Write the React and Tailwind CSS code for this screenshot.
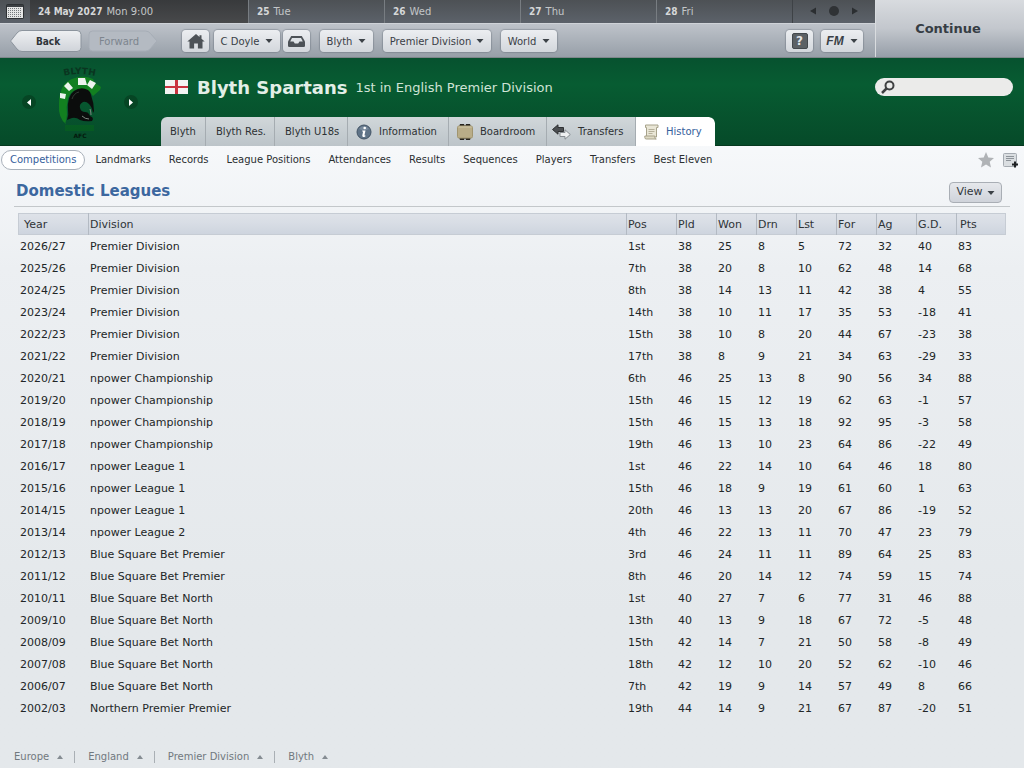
const days = ['25 Tue', '26 Wed', '27 Thu', '28 Fri'];

const tabs = [
  { label: 'Blyth', width: 'w-[45px] pl-[9px]' },
  { label: 'Blyth Res.', width: 'w-[69px] pl-[10px]' },
  { label: 'Blyth U18s', width: 'w-[73px] pl-[10px]' },
  { label: 'Information', width: 'w-[101px] pl-[8px]', icon: InfoIcon },
  { label: 'Boardroom', width: 'w-[98px] pl-[8px]', icon: BoardroomIcon },
  { label: 'Transfers', width: 'w-[89px] pl-[5px]', icon: TransfersIcon },
  { label: 'History', width: 'w-[79px] pl-[8px]', icon: HistoryIcon, active: true },
];

const sections = [
  'Competitions', 'Landmarks', 'Records', 'League Positions', 'Attendances',
  'Results', 'Sequences', 'Players', 'Transfers', 'Best Eleven',
];

const columns = ['Year', 'Division', 'Pos', 'Pld', 'Won', 'Drn', 'Lst', 'For', 'Ag', 'G.D.', 'Pts'];

const seasons = [
  ['2026/27', 'Premier Division', '1st', 38, 25, 8, 5, 72, 32, 40, 83],
  ['2025/26', 'Premier Division', '7th', 38, 20, 8, 10, 62, 48, 14, 68],
  ['2024/25', 'Premier Division', '8th', 38, 14, 13, 11, 42, 38, 4, 55],
  ['2023/24', 'Premier Division', '14th', 38, 10, 11, 17, 35, 53, -18, 41],
  ['2022/23', 'Premier Division', '15th', 38, 10, 8, 20, 44, 67, -23, 38],
  ['2021/22', 'Premier Division', '17th', 38, 8, 9, 21, 34, 63, -29, 33],
  ['2020/21', 'npower Championship', '6th', 46, 25, 13, 8, 90, 56, 34, 88],
  ['2019/20', 'npower Championship', '15th', 46, 15, 12, 19, 62, 63, -1, 57],
  ['2018/19', 'npower Championship', '15th', 46, 15, 13, 18, 92, 95, -3, 58],
  ['2017/18', 'npower Championship', '19th', 46, 13, 10, 23, 64, 86, -22, 49],
  ['2016/17', 'npower League 1', '1st', 46, 22, 14, 10, 64, 46, 18, 80],
  ['2015/16', 'npower League 1', '15th', 46, 18, 9, 19, 61, 60, 1, 63],
  ['2014/15', 'npower League 1', '20th', 46, 13, 13, 20, 67, 86, -19, 52],
  ['2013/14', 'npower League 2', '4th', 46, 22, 13, 11, 70, 47, 23, 79],
  ['2012/13', 'Blue Square Bet Premier', '3rd', 46, 24, 11, 11, 89, 64, 25, 83],
  ['2011/12', 'Blue Square Bet Premier', '8th', 46, 20, 14, 12, 74, 59, 15, 74],
  ['2010/11', 'Blue Square Bet North', '1st', 40, 27, 7, 6, 77, 31, 46, 88],
  ['2009/10', 'Blue Square Bet North', '13th', 40, 13, 9, 18, 67, 72, -5, 48],
  ['2008/09', 'Blue Square Bet North', '15th', 42, 14, 7, 21, 50, 58, -8, 49],
  ['2007/08', 'Blue Square Bet North', '18th', 42, 12, 10, 20, 52, 62, -10, 46],
  ['2006/07', 'Blue Square Bet North', '7th', 42, 19, 9, 14, 57, 49, 8, 66],
  ['2002/03', 'Northern Premier Premier', '19th', 44, 14, 9, 21, 67, 87, -20, 51],
];

const crumbs = ['Europe', 'England', 'Premier Division', 'Blyth'];

function Caret({ className = 'text-[#3c4247]' }) {
  return (
    <svg width="8" height="4" viewBox="0 0 8 4" className={`shrink-0 ${className}`} aria-hidden="true">
      <path d="M0.5 0h7L4 4z" fill="currentColor" />
    </svg>
  );
}

function CalendarIcon() {
  return (
    <svg width="18" height="15" viewBox="0 0 18 15" aria-hidden="true">
      <rect x="0.5" y="0.5" width="17" height="14" rx="1" fill="#3b3f43" stroke="#2d3033" />
      <rect x="1" y="3" width="16" height="11" fill="#e4e5e5" />
      {[4, 6, 8, 10, 12].map((y) => (
        <path key={y} d={`M2 ${y + 0.5}h14`} stroke="#74787b" strokeDasharray="1 1" />
      ))}
    </svg>
  );
}

function HomeIcon() {
  return (
    <svg width="18" height="15" viewBox="0 0 18 15" fill="#4d5257" aria-hidden="true">
      <path d="M9 0 0.3 7.6h2.2V14.5h4.6V9.5h3.8v5h4.6V7.6h2.2L14.5 4.8V1.2h-2v1.9z" />
    </svg>
  );
}

function InboxIcon() {
  return (
    <svg width="17" height="11" viewBox="0 0 17 11" aria-hidden="true">
      <path d="M3.2 0h10.6L17 5.5v4.2q0 1.3-1.3 1.3H1.3Q0 11 0 9.7V5.5z" fill="#4d5257" />
      <path d="M4 2h9l1.800 3.500h-3.300l-1.300 2H6.800l-1.300-2H2.200z" fill="#dfe3e7" />
    </svg>
  );
}

function HelpIcon() {
  return (
    <span className="flex size-4 items-center justify-center rounded-[2px] border border-[#44494d] bg-[#5c6165] text-[12px] leading-none font-bold text-[#e4e6e8]">
      ?
    </span>
  );
}

function InfoIcon() {
  return (
    <svg width="16" height="16" viewBox="0 0 16 16" aria-hidden="true">
      <circle cx="8" cy="8" r="7" fill="#5f7387" stroke="#435465" />
      <path d="M3 5a6 6 0 0 1 10 0q-5 2.500-10 0z" fill="#8798a8" opacity="0.6" />
      <circle cx="8.700" cy="4" r="1.300" fill="#fff" />
      <path d="M6.300 6.500h3.200l-1 4.600q-.1.700 1 .3l-.2 1q-3.300 1.400-3-.9l.8-4H6.100z" fill="#fff" />
    </svg>
  );
}

function BoardroomIcon() {
  return (
    <svg width="16" height="16" viewBox="0 0 16 16" aria-hidden="true">
      <path d="M3 0h4l.5 1.500h1L9 0h4l1 3H2zM3 16h4l.5-1.500h1L9 16h4l1-3H2z" fill="#26241f" />
      <rect x="0.500" y="2" width="15" height="12" rx="1.500" fill="#b9ad88" stroke="#a1956f" />
      <path d="M1.500 3h13" stroke="#d2c9a9" />
    </svg>
  );
}

function TransfersIcon() {
  return (
    <svg width="19" height="16" viewBox="0 0 19 16" aria-hidden="true">
      <path d="M18.300 10.500 13 5.800v2.700H8v4h5v2.700z" fill="#eef0f1" stroke="#868b90" strokeLinejoin="round" />
      <path d="M0.500 5.500 6 0.800v2.700h5.500v4H6v2.700z" fill="#4b4e51" stroke="#2f3133" strokeLinejoin="round" />
    </svg>
  );
}

function HistoryIcon() {
  return (
    <svg width="15" height="16" viewBox="0 0 15 16" fill="none" aria-hidden="true">
      <path d="M1.500 1h12.500v2.500H12.500V13H2.500V3.500h-1z" fill="#e9e6d6" stroke="#a7a28a" />
      <path d="M0.800 12h10v1.500q0 1.500 1.500 1.500H2.300Q.8 15 .8 13.500z" fill="#dedac5" stroke="#a7a28a" />
      <path d="M4.500 5.500h6M4.500 7.500h6M4.500 9.500h4" stroke="#b5b09b" />
    </svg>
  );
}

function Crest() {
  return (
    <svg width="50" height="80" viewBox="0 0 50 80" className="shrink-0" aria-label="Blyth Spartans crest" role="img">
      <defs>
        <path id="crest-arc" d="M2 16Q24 8 47 16" />
      </defs>
      <text fontFamily="DejaVu Sans" fontSize="9" fontWeight="bold" fill="#0a3520">
        <textPath href="#crest-arc" startOffset="50%" textAnchor="middle">BLYTH</textPath>
      </text>
      <path
        d="M11 62Q3 56 4 42 4 20 20 16q9-3 18 1l2 4 6 4-1 3-7 6q-4-7-13-7-10 1-12 10-2 8-1 15 0 5-2 10z"
        fill="#128020"
      />
      <path d="M5 31l6 1-1 5-5-1zM9 24l4-4 5 6-4 3zM23 16h7l2 7h-9zM35 18l6 3-4 6-5-4z" fill="#edf3ee" />
      <path
        d="M12 58q2-5 1-10-1-14 6-19 7-5 14-1 3 2 3 5 3 8 3 16l-1 2q-1-6-4-9-3-3-6-2-4 2-3 6 1 4 5 4 3 0 4 2l1 2q3 1 3 3l-1 2q-7 1-12-1-4-3-8-2-3 1-5 2z"
        fill="#0b0d0c"
      />
      <path d="M17 37q2-6 7-7" stroke="#343a36" fill="none" />
      <path d="M35 47q1 3 1 6M27 54q3 3 7 3" stroke="#7d8780" fill="none" />
      <path d="M10 63h29v6H10z" fill="#07601f" opacity="0.7" />
      <text x="25" y="76" textAnchor="middle" fontFamily="DejaVu Sans" fontSize="6" fontWeight="bold" fill="#04190d">
        AFC
      </text>
    </svg>
  );
}

function Flag() {
  return (
    <svg width="23" height="14" viewBox="0 0 23 14" aria-label="England" role="img">
      <path d="M0 0h23v14H0z" fill="#f3f4f3" />
      <path d="M10 0h3v14h-3zM0 6h23v2H0z" fill="#c93440" />
    </svg>
  );
}

function ToolButton({ className = '', children, ...rest }) {
  return (
    <button
      type="button"
      className={`flex h-[22px] items-center justify-center rounded bg-linear-to-b from-[#eceef1] to-[#d3d7dc] text-[#3a4046] shadow-[0_0_1px_1px_rgba(90,98,108,0.35)] ${className}`}
      {...rest}
    >
      {children}
    </button>
  );
}

function TopBar() {
  return (
    <header className="flex h-[58px] border-b border-[#7e868a]">
      <div className="flex min-w-0 flex-1 flex-col">
        <div className="flex h-[23px] shrink-0 bg-linear-to-b from-[#4d5155] to-[#5c626a] text-[#c3c6c8]">
          <button type="button" aria-label="Calendar" className="flex w-[30px] items-center justify-center">
            <CalendarIcon />
          </button>
          <div className="flex w-[218px] items-center gap-1 bg-linear-to-b from-[#383a3c] to-[#48494b] pl-2">
            <b className="font-['DejaVu_Sans_Condensed','DejaVu_Sans',sans-serif] text-[#d5d7d8]">24 May 2027</b>
            <span>Mon 9:00</span>
          </div>
          {days.map((day) => (
            <div key={day} className="flex flex-1 items-center gap-1 border-l border-[#787d82] pl-2">
              <b className="font-['DejaVu_Sans_Condensed','DejaVu_Sans',sans-serif] text-[#d5d7d8]">
                {day.slice(0, 2)}
              </b>
              <span>{day.slice(3)}</span>
            </div>
          ))}
          <div className="flex w-[83px] items-center justify-center gap-[13px] border-l border-[#3e4246] pb-[2px] text-[#2b2e31]">
            <button type="button" aria-label="Previous day">
              <svg width="6" height="8" viewBox="0 0 6 8"><path d="M6 0.500v7L0 4z" fill="currentColor" /></svg>
            </button>
            <button type="button" aria-label="Today" className="size-[10px] rounded-full bg-[#2f3235]" />
            <button type="button" aria-label="Next day">
              <svg width="6" height="8" viewBox="0 0 6 8"><path d="M0 0.500v7L6 4z" fill="currentColor" /></svg>
            </button>
          </div>
        </div>
        <nav className="flex flex-1 items-center border-t border-[#cfd3d8] bg-linear-to-b from-[#bec3ca] to-[#979fa8] pt-px pl-[10px]">
          <button type="button" className="grid h-[24px] w-[72px] place-items-center font-bold text-[#2f3439]">
            <svg width="72" height="24" viewBox="0 0 72 24" className="col-start-1 row-start-1" aria-hidden="true">
              <defs>
                <linearGradient id="back-fill" x1="0" y1="0" x2="0" y2="1">
                  <stop stopColor="#eef0f2" />
                  <stop offset="1" stopColor="#cfd3d9" />
                </linearGradient>
              </defs>
              <path
                d="M12 1.500h55q4 0 4 4v13q0 4-4 4H12Q9 22.500 7 20L1 12.500v-1L7 4q2-2.500 5-2.500z"
                fill="url(#back-fill)"
                stroke="#8c949d"
              />
            </svg>
            <span className="col-start-1 row-start-1 pl-1 font-['DejaVu_Sans_Condensed','DejaVu_Sans',sans-serif]">
              Back
            </span>
          </button>
          <button type="button" disabled className="ml-[6px] grid h-[24px] w-[70px] place-items-center text-[#7d858e]">
            <svg width="70" height="24" viewBox="0 0 70 24" className="col-start-1 row-start-1" aria-hidden="true">
              <path
                d="M4.500 2h53q3 0 5 2.500l6 7v1l-6 7q-2 2.500-5 2.500h-53Q1 22 1 18.500v-13Q1 2 4.500 2z"
                fill="#b4bac2"
                stroke="#a6adb6"
              />
            </svg>
            <span className="col-start-1 row-start-1 pr-2">Forward</span>
          </button>
          <ToolButton aria-label="Home" className="ml-6 w-[27px]"><HomeIcon /></ToolButton>
          <ToolButton className="ml-[5px] w-[66px] gap-[6px]">C Doyle <Caret /></ToolButton>
          <ToolButton aria-label="Inbox" className="ml-[3px] w-[27px]"><InboxIcon /></ToolButton>
          <ToolButton className="ml-[10px] w-[53px] gap-[6px]">Blyth <Caret /></ToolButton>
          <ToolButton className="ml-[10px] w-[108px] gap-[5px]">Premier Division <Caret /></ToolButton>
          <ToolButton className="ml-[10px] w-[56px] gap-[6px]">World <Caret /></ToolButton>
          <ToolButton aria-label="Help" className="ml-auto w-[27px]"><HelpIcon /></ToolButton>
          <ToolButton className="mr-3 ml-2 w-[42px] gap-[6px]">
            <b className="font-['Liberation_Sans',sans-serif] text-[12px] leading-none italic">FM</b> <Caret />
          </ToolButton>
        </nav>
      </div>
      <button
        type="button"
        className="w-[149px] border-l border-[#d9dcdf] bg-linear-to-b from-[#d8dbdf] via-[#c3c7cd] to-[#969ea8] pr-1 text-[13px] font-bold text-[#363d44]"
      >
        Continue
      </button>
    </header>
  );
}

function ClubHeader() {
  return (
    <div className="flex h-[88px] bg-linear-to-b from-[#07522f] via-[#075c32] via-30% to-[#064a29] shadow-[inset_0_-1px_0_#06391f]">
      <div className="flex w-[161px] shrink-0 items-center">
        <button
          type="button"
          aria-label="Previous club"
          className="ml-[22px] flex size-[14px] items-center justify-center rounded-full bg-[#064524] text-white"
        >
          <svg width="4" height="7" viewBox="0 0 4 7"><path d="M4 0v7L0 3.500z" fill="currentColor" /></svg>
        </button>
        <div className="flex flex-1 justify-center"><Crest /></div>
        <button
          type="button"
          aria-label="Next club"
          className="mr-[23px] flex size-[14px] items-center justify-center rounded-full bg-[#064524] text-white"
        >
          <svg width="4" height="7" viewBox="0 0 4 7"><path d="M0 0v7l4-3.500z" fill="currentColor" /></svg>
        </button>
      </div>
      <div className="flex flex-1 flex-col justify-between">
        <div className="flex h-[58px] items-center pr-[11px] pl-1">
          <Flag />
          <h1 className="ml-[9px] text-[18px] font-bold text-[#e3efe7]">Blyth Spartans</h1>
          <p className="ml-2 pt-[2px] text-[13px] text-[#cfe3d6]">1st in English Premier Division</p>
          <label className="ml-auto flex h-[18px] w-[138px] items-center rounded-full bg-[#ebebea] pl-[6px]">
            <svg width="14" height="14" viewBox="0 0 14 14" fill="none" stroke="#3f4042" className="shrink-0" aria-hidden="true">
              <circle cx="8.500" cy="5.500" r="4" strokeWidth="2" />
              <path d="M5.500 8.500 1 13" strokeWidth="2.500" />
            </svg>
            <input type="search" aria-label="Search" className="w-full min-w-0 px-1 outline-none" />
          </label>
        </div>
        <nav className="flex h-[29px] self-start overflow-hidden rounded-t-md">
          {tabs.map(({ label, width, icon: Icon, active }) => (
            <a
              key={label}
              href="#"
              className={`flex items-center gap-[7px] ${width} ${
                active
                  ? 'rounded-tr-md bg-white text-[#35609c]'
                  : 'border-r border-r-[#a5acb1] bg-linear-to-b from-[#d1d7da] to-[#bcc4c9] text-[#2d3133]'
              }`}
            >
              {Icon && <Icon />}
              {label}
            </a>
          ))}
        </nav>
      </div>
    </div>
  );
}

function SubNav() {
  return (
    <nav className="flex h-[27px] items-center pl-px">
      {sections.map((section, i) => (
        <a
          key={section}
          href="#"
          className={`flex h-5 items-center rounded-full ${
            i === 0 ? 'mr-px border border-[#a9b1ba] bg-white px-2 text-[#35609c]' : 'px-[9px] text-[#2b2f31]'
          }`}
        >
          {section}
        </a>
      ))}
      <button type="button" aria-label="Favourite" className="ml-auto">
        <svg width="16" height="16" viewBox="0 0 16 16" fill="#b0b3b6" aria-hidden="true">
          <path d="M8 0l2.300 5.500 5.700.5-4.300 3.800L13 15.500 8 12.400 3 15.500l1.300-5.700L0 6l5.700-.5z" />
        </svg>
      </button>
      <button type="button" aria-label="Add note" className="mr-[6px] ml-[9px]">
        <svg width="15" height="16" viewBox="0 0 15 16" fill="none" aria-hidden="true">
          <rect x="0.500" y="1.500" width="13" height="13" rx="1" fill="#dadee1" stroke="#a5abb1" />
          <path d="M3 4.500h8M3 6.500h8M3 8.500h5" stroke="#8d9399" />
          <path d="M12 9.500v6M9 12.500h6" stroke="#1f2224" strokeWidth="2" />
        </svg>
      </button>
    </nav>
  );
}

function LeagueTable() {
  return (
    <table className="w-full table-fixed border-collapse text-left text-[11px] text-[#222627]">
      <colgroup>
        <col className="w-[70px]" />
        <col />
        <col className="w-[50px]" />
        <col className="w-[40px]" span={7} />
        <col className="w-[50px]" />
      </colgroup>
      <thead>
        <tr className="h-[22px] bg-linear-to-b from-[#dfe3e9] via-[#d8dde5] via-45% to-[#cdd4de] text-[#2f3437] shadow-[inset_0_0_0_1px_#c6ccd4]">
          {columns.map((name, i) => (
            <th
              key={name}
              scope="col"
              className={`p-0 pt-[2px] font-normal ${i === 0 ? 'pl-[6px]' : 'shadow-[inset_1px_0_0_#b3bac3]'} ${
                i === 10 ? 'pl-1' : 'pl-[2px]'
              }`}
            >
              {name}
            </th>
          ))}
        </tr>
      </thead>
      <tbody>
        {seasons.map((row) => (
          <tr key={row[0]} className="h-[22px]">
            {row.map((value, i) => (
              <td key={columns[i]} className="p-0 pt-[2px] pl-[2px]">{value}</td>
            ))}
          </tr>
        ))}
      </tbody>
    </table>
  );
}

export default function App() {
  return (
    <div className="flex min-h-screen flex-col bg-linear-to-b from-[#f7f9fb] from-18% via-[#eceff2] via-35% to-[#e4e8eb] to-80% font-['DejaVu_Sans',sans-serif] text-[10px]">
      <TopBar />
      <ClubHeader />
      <SubNav />
      <main className="px-[14px]">
        <div className="flex h-[34px] items-center justify-between border-b border-[#c3c7ca] pr-2 pl-[2px]">
          <h2 className="pt-[3px] text-[15px] font-bold text-[#3c679f]">Domestic Leagues</h2>
          <button
            type="button"
            className="mt-[5px] flex h-[21px] w-[53px] items-center justify-center gap-1 rounded border border-[#a9aeb5] bg-linear-to-b from-[#e6e8ec] to-[#cfd3da] pt-px text-[11px] text-[#32373b]"
          >
            View <Caret />
          </button>
        </div>
        <div className="mt-[6px] mr-1 ml-1">
          <LeagueTable />
        </div>
      </main>
      <footer className="mt-auto flex h-[23px] items-center pl-[14px] text-[#71787e]">
        {crumbs.map((crumb, i) => (
          <button
            key={crumb}
            type="button"
            className={`flex h-3 items-center gap-2 pr-[11px] ${i > 0 ? 'border-l border-[#a9afb4] pl-[13px]' : ''}`}
          >
            {crumb}
            <svg width="6" height="4" viewBox="0 0 6 4" aria-hidden="true"><path d="M0 4h6L3 0z" fill="#858c92" /></svg>
          </button>
        ))}
      </footer>
    </div>
  );
}
